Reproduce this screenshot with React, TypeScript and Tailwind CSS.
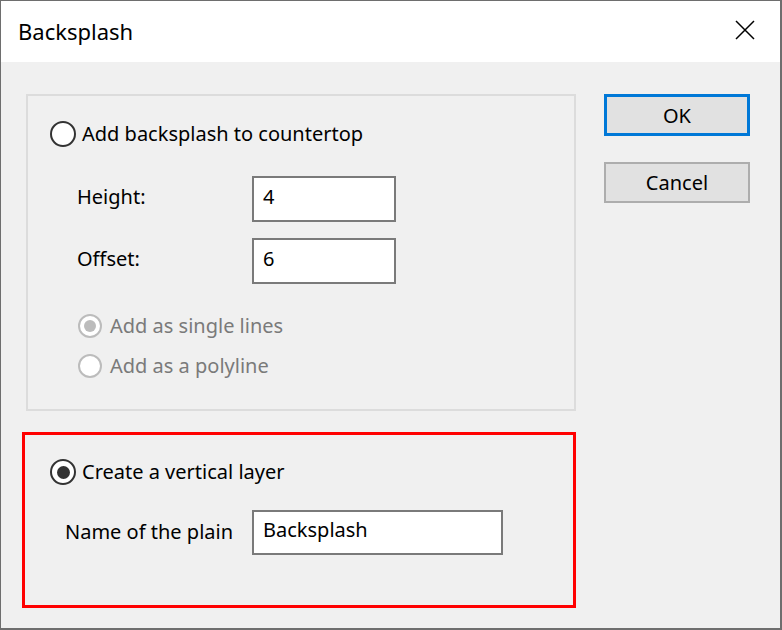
import React from 'react';

const FONT = { fontFamily: '"Noto Sans", "Open Sans", sans-serif' };

function Radio({ checked, disabled }: { checked?: boolean; disabled?: boolean }) {
  return (
    <span
      className={
        'flex items-center justify-center rounded-full border-2 bg-white shrink-0 ' +
        (disabled ? 'w-[24px] h-[24px] border-[#bcbcbc]' : 'w-[26px] h-[26px] border-[#333333]')
      }
    >
      {checked && (
        <span
          className={
            'rounded-full ' + (disabled ? 'w-[12px] h-[12px] bg-[#bcbcbc]' : 'w-[13px] h-[13px] bg-[#333333]')
          }
        />
      )}
    </span>
  );
}

function Field({ value, width }: { value: string; width: string }) {
  return (
    <div className={'h-full bg-white border-2 border-[#7a7a7a] flex items-center pl-[9px] ' + width}>
      <span className="text-[20px] text-black leading-none -mt-[5px]">{value}</span>
    </div>
  );
}

export default function App() {
  return (
    <div
      className="w-[782px] h-[630px] flex flex-col border-t border-l border-r-2 border-b-2 border-[#6e6e6e] bg-[#f0f0f0] overflow-hidden"
      style={FONT}
    >
      {/* Title bar */}
      <div className="h-[61px] bg-white flex items-center justify-between shrink-0">
        <span className="pl-[17px] text-[22px] text-black">Backsplash</span>
        <svg width="20" height="20" viewBox="0 0 20 20" className="mr-[25px] -mt-[3px]">
          <path d="M1 1 L19 19 M19 1 L1 19" stroke="#000" strokeWidth="1.5" />
        </svg>
      </div>

      <div className="flex flex-1">
        {/* Left column */}
        <div className="flex flex-col">
          <div className="ml-[25px] mt-[32px] w-[550px] h-[317px] border-2 border-[#dcdcdc] flex flex-col">
            <div className="flex items-center h-[26px] mt-[25px] pl-[22px] gap-[6px]">
              <Radio />
              <span className="text-[20px] text-black -mt-[1px]">Add backsplash to countertop</span>
            </div>

            <div className="flex items-center h-[46px] mt-[29px] pl-[49px]">
              <span className="w-[175px] text-[20px] text-black -mt-[4px]">Height:</span>
              <Field value="4" width="w-[144px]" />
            </div>

            <div className="flex items-center h-[46px] mt-[16px] pl-[49px]">
              <span className="w-[175px] text-[20px] text-black -mt-[4px]">Offset:</span>
              <Field value="6" width="w-[144px]" />
            </div>

            <div className="flex items-center h-[24px] mt-[30px] pl-[50px] gap-[8px]">
              <Radio checked disabled />
              <span className="text-[20px] text-[#7a7a7a] -mt-[1px]">Add as single lines</span>
            </div>

            <div className="flex items-center h-[24px] mt-[16px] pl-[50px] gap-[8px]">
              <Radio disabled />
              <span className="text-[20px] text-[#7a7a7a] -mt-[1px]">Add as a polyline</span>
            </div>
          </div>

          <div className="ml-[21px] mt-[21px] w-[554px] h-[176px] border-[3px] border-[#ff0000] flex flex-col">
            <div className="flex items-center h-[26px] mt-[24px] pl-[25px] gap-[6px]">
              <Radio checked />
              <span className="text-[20px] text-black -mt-[1px]">Create a vertical layer</span>
            </div>

            <div className="flex items-center h-[45px] mt-[25px] pl-[40px]">
              <span className="w-[187px] text-[20px] text-black -mt-[1px]">Name of the plain</span>
              <Field value="Backsplash" width="w-[251px]" />
            </div>
          </div>
        </div>

        {/* Buttons */}
        <div className="flex flex-col ml-[28px] mt-[32px] gap-[26px]">
          <button className="w-[146px] h-[42px] bg-[#e1e1e1] border-[3px] border-[#0078d7] text-[20px] text-black flex items-center justify-center">
            <span className="mt-[1px]">OK</span>
          </button>
          <button className="w-[146px] h-[41px] bg-[#e1e1e1] border-2 border-[#adadad] text-[20px] text-black flex items-center justify-center">
            <span className="mt-[1px]">Cancel</span>
          </button>
        </div>
      </div>
    </div>
  );
}
